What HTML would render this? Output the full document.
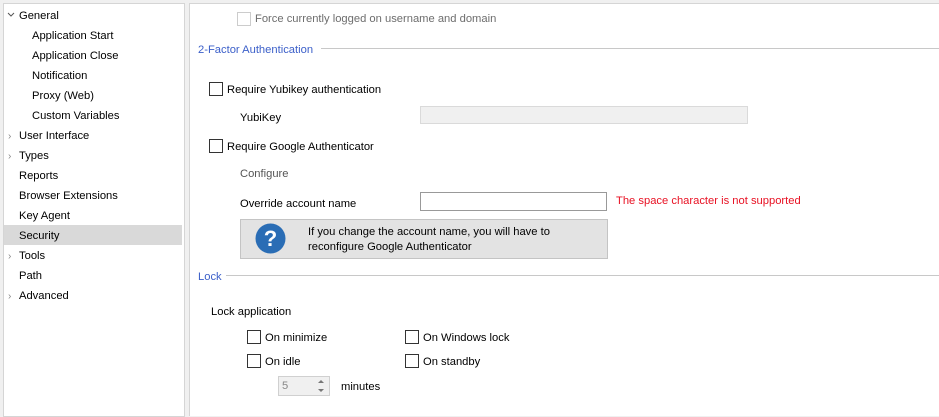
<!DOCTYPE html>
<html><head><style>
body{margin:0;width:939px;height:412px;background:#f0f0f0;font-family:"Liberation Sans",sans-serif;font-size:11.2px;line-height:16px;color:#000;position:relative;overflow:hidden}
.a{position:absolute;white-space:nowrap}
#left{position:absolute;left:3px;top:3px;width:180px;height:412px;background:#fff;border:1px solid #d5d5d5}
#right{position:absolute;left:189px;top:3px;width:760px;height:412px;background:#fff;border-left:1px solid #d5d5d5;border-top:1px solid #d5d5d5}
.cb{position:absolute;width:12px;height:12px;border:1px solid #333;background:#fff}
.arr{position:absolute;color:#888;font-size:10px}
.blue{color:#3b5fc9}
.line{position:absolute;height:1px;background:#c8c8c8}
</style></head><body>
<div id="left"></div>
<div class="a" style="left:4px;top:225px;width:178px;height:20px;background:#d9d9d9"></div>
<svg class="a" style="left:7px;top:12px" width="8" height="6"><path d="M1 1 L4 4 L7 1" fill="none" stroke="#555" stroke-width="1"/></svg>
<div class="a" style="left:19px;top:8px">General</div>
<div class="a" style="left:32px;top:28px">Application Start</div>
<div class="a" style="left:32px;top:48px">Application Close</div>
<div class="a" style="left:32px;top:68px">Notification</div>
<div class="a" style="left:32px;top:88px">Proxy (Web)</div>
<div class="a" style="left:32px;top:108px">Custom Variables</div>
<div class="arr a" style="left:8px;top:129px">›</div><div class="a" style="left:19px;top:128px">User Interface</div>
<div class="arr a" style="left:8px;top:149px">›</div><div class="a" style="left:19px;top:148px">Types</div>
<div class="a" style="left:19px;top:168px">Reports</div>
<div class="a" style="left:19px;top:188px">Browser Extensions</div>
<div class="a" style="left:19px;top:208px">Key Agent</div>
<div class="a" style="left:19px;top:228px">Security</div>
<div class="arr a" style="left:8px;top:249px">›</div><div class="a" style="left:19px;top:248px">Tools</div>
<div class="a" style="left:19px;top:268px">Path</div>
<div class="arr a" style="left:8px;top:289px">›</div><div class="a" style="left:19px;top:288px">Advanced</div>

<div id="right"></div>
<div class="cb" style="left:237px;top:12px;border-color:#ccc"></div>
<div class="a" style="left:255px;top:11px;color:#6d6d6d">Force currently logged on username and domain</div>
<div class="a blue" style="left:198px;top:42px">2-Factor Authentication</div>
<div class="line" style="left:321px;top:48px;width:618px"></div>
<div class="cb" style="left:209px;top:82px"></div>
<div class="a" style="left:227px;top:82px">Require Yubikey authentication</div>
<div class="a" style="left:240px;top:110px">YubiKey</div>
<div class="a" style="left:420px;top:106px;width:326px;height:16px;background:#f0f0f0;border:1px solid #dadada"></div>
<div class="cb" style="left:209px;top:139px"></div>
<div class="a" style="left:227px;top:139px">Require Google Authenticator</div>
<div class="a" style="left:240px;top:166px;color:#555">Configure</div>
<div class="a" style="left:240px;top:196px">Override account name</div>
<div class="a" style="left:420px;top:192px;width:185px;height:17px;background:#fff;border:1px solid #999"></div>
<div class="a" style="left:616px;top:193px;color:#e81123">The space character is not supported</div>
<div class="a" style="left:240px;top:219px;width:366px;height:38px;background:#e3e3e3;border:1px solid #c4c4c4"></div>
<svg class="a" style="left:255px;top:223px" width="31" height="31"><circle cx="15.5" cy="15.5" r="15" fill="#2a6db5"/><text x="15.5" y="23" font-family="Liberation Sans" font-weight="bold" font-size="22" fill="#fff" text-anchor="middle">?</text></svg>
<div class="a" style="left:308px;top:225px;line-height:15px">If you change the account name, you will have to<br>reconfigure Google Authenticator</div>
<div class="a blue" style="left:198px;top:269px">Lock</div>
<div class="line" style="left:226px;top:275px;width:713px"></div>
<div class="a" style="left:211px;top:304px">Lock application</div>
<div class="cb" style="left:247px;top:330px"></div><div class="a" style="left:265px;top:330px">On minimize</div>
<div class="cb" style="left:405px;top:330px"></div><div class="a" style="left:423px;top:330px">On Windows lock</div>
<div class="cb" style="left:247px;top:354px"></div><div class="a" style="left:265px;top:354px">On idle</div>
<div class="cb" style="left:405px;top:354px"></div><div class="a" style="left:423px;top:354px">On standby</div>
<div class="a" style="left:278px;top:376px;width:50px;height:18px;background:#f0f0f0;border:1px solid #d0d0d0"></div>
<div class="a" style="left:282px;top:378px;color:#888">5</div>
<svg class="a" style="left:315px;top:377px" width="12" height="18"><path d="M3 6 L6 3 L9 6Z M3 12 L6 15 L9 12Z" fill="#777"/></svg>
<div class="a" style="left:341px;top:379px">minutes</div>
</body></html>
